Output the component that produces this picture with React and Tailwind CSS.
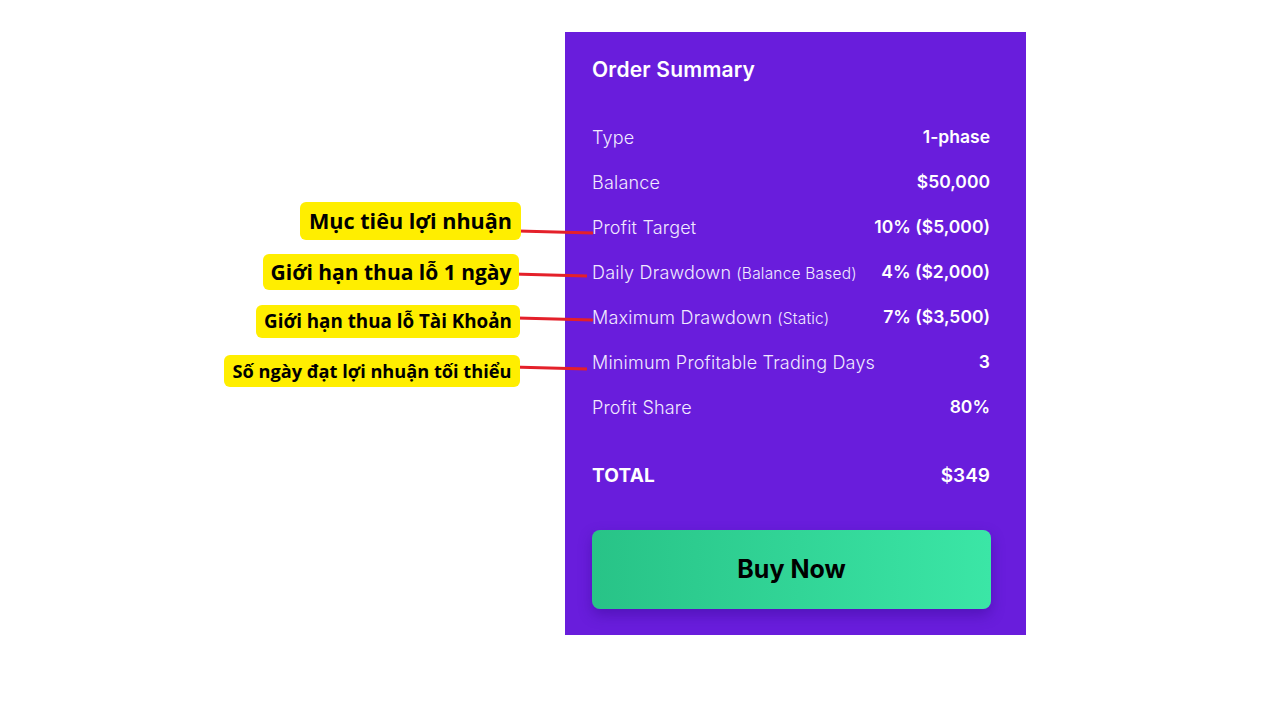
import React from 'react';

const rows = [
  { label: 'Type', value: '1-phase' },
  { label: 'Balance', value: '$50,000' },
  { label: 'Profit Target', value: '10% ($5,000)' },
  { label: 'Daily Drawdown', note: '(Balance Based)', value: '4% ($2,000)' },
  { label: 'Maximum Drawdown', note: '(Static)', value: '7% ($3,500)' },
  { label: 'Minimum Profitable Trading Days', value: '3' },
  { label: 'Profit Share', value: '80%' },
];

// callouts pointing at the rows, in page coordinates
const callouts = [
  { text: 'Mục tiêu lợi nhuận', box: 'left-[300px] top-[202px] w-[221px] h-[38px] text-[21.6px]', line: { x1: 518, y1: 231, x2: 593, y2: 233 } },
  { text: 'Giới hạn thua lỗ 1 ngày', box: 'left-[263px] top-[254px] w-[256px] h-[36px] text-[21px]', line: { x1: 513, y1: 274, x2: 587, y2: 276 } },
  { text: 'Giới hạn thua lỗ Tài Khoản', box: 'left-[256px] top-[305px] w-[264px] h-[33px] text-[18.8px]', line: { x1: 517, y1: 318, x2: 593, y2: 320 } },
  { text: 'Số ngày đạt lợi nhuận tối thiểu', box: 'left-[224px] top-[355px] w-[296px] h-[32px] text-[18.2px]', line: { x1: 512, y1: 367, x2: 587, y2: 369 } },
];

export default function App() {
  return (
    <div className="relative w-[1280px] h-[720px] bg-white overflow-hidden">
      <div className="flex pt-[32px] pl-[565px]">
        <div
          className="w-[461px] h-[603px] bg-[#691ddc] pl-[27px] pr-[36px] pt-[24px] text-white"
          style={{ fontFamily: 'Inter, "Noto Sans", sans-serif' }}
        >
          <h2 className="text-[21px] font-semibold leading-[28px] tracking-[0.2px]">Order Summary</h2>

          <div className="mt-[31px] flex flex-col">
            {rows.map((r) => (
              <div key={r.label} className="flex h-[45px] items-center justify-between">
                <span className="text-[18px] font-light tracking-[0.2px] text-[#f1eaff]">
                  {r.label}
                  {r.note && <span className="ml-[5px] text-[15.5px]">{r.note}</span>}
                </span>
                <span className="text-[17.5px] font-semibold">{r.value}</span>
              </div>
            ))}
          </div>

          <div className="mt-[32px] flex h-[28px] items-center justify-between">
            <span className="text-[19px] font-bold tracking-[0.2px]">TOTAL</span>
            <span className="text-[19px] font-semibold">$349</span>
          </div>

          <button className="mt-[40px] flex h-[79px] w-[399px] items-center justify-center rounded-[8px] bg-gradient-to-r from-[#28c387] to-[#3be6a6] text-[25px] font-bold text-black shadow-[0_6px_14px_rgba(40,0,120,0.35)]">
            Buy Now
          </button>
        </div>
      </div>

      <svg className="absolute left-0 top-0" width="1280" height="720">
        {callouts.map((c, i) => (
          <line key={i} {...c.line} stroke="#e4202a" strokeWidth="3.2" />
        ))}
      </svg>

      {callouts.map((c) => (
        <div
          key={c.text}
          className={`absolute flex items-center justify-center whitespace-nowrap rounded-[6px] bg-[#ffee00] font-bold text-black leading-none ${c.box}`}
          style={{ fontFamily: '"Open Sans", "Noto Sans", sans-serif' }}
        >
          {c.text}
        </div>
      ))}
    </div>
  );
}
